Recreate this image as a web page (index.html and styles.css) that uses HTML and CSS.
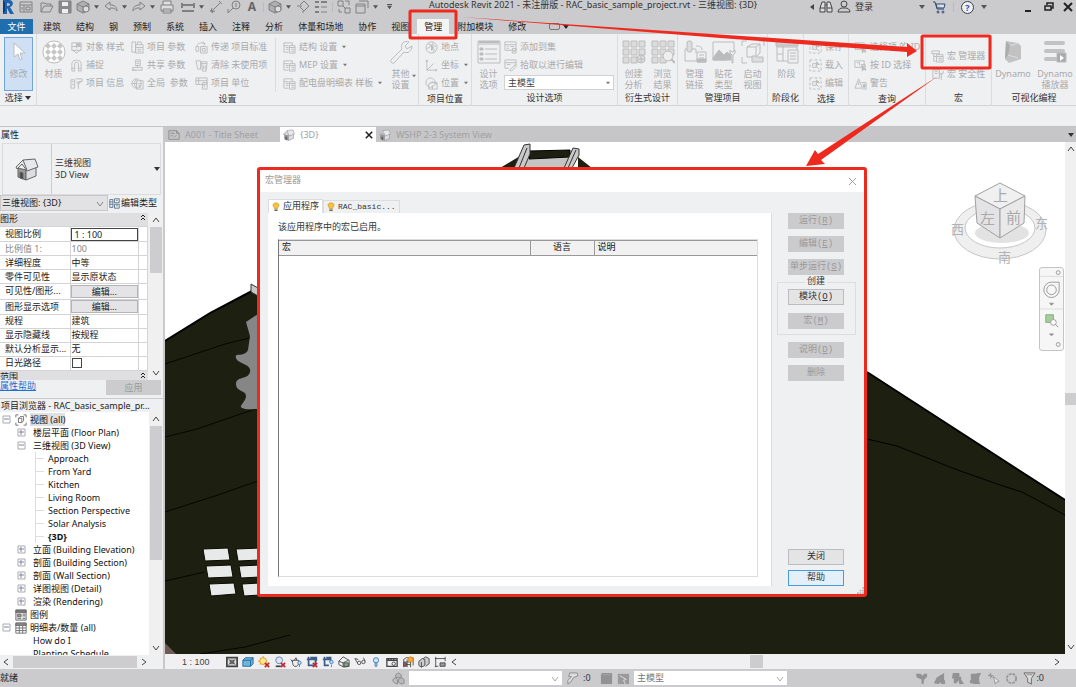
FILE: index.html
```
<!DOCTYPE html>
<html lang="zh-CN">
<head>
    <meta charset="UTF-8">
    <meta name="viewport" content="width=device-width, initial-scale=1.0">
    <title>Autodesk Revit 2021</title>
    <link rel="stylesheet" href="styles.css">
</head>
<body>

<!-- icon set -->
<svg class="sprite" aria-hidden="true">
    <symbol id="caret" viewBox="0 0 6 6"><path d="M0 1h6L3 5z" fill="currentColor" stroke="none"/></symbol>
    <symbol id="chev-down" viewBox="0 0 8 8"><path d="M1 2l3 4 3-4"/></symbol>
    <symbol id="chev-up" viewBox="0 0 8 8"><path d="M1 6l3-4 3 4"/></symbol>
    <symbol id="chev-left" viewBox="0 0 8 8"><path d="M6 1L2 4l4 3"/></symbol>
    <symbol id="chev-right" viewBox="0 0 8 8"><path d="M2 1l4 3-4 3"/></symbol>
    <symbol id="dbl-up" viewBox="0 0 8 8"><path d="M2 4l2-2 2 2M2 7l2-2 2 2"/></symbol>
    <symbol id="close" viewBox="0 0 10 10"><path d="M1 1l8 8M9 1L1 9"/></symbol>

    <symbol id="logo" viewBox="0 0 14 14"><path d="M2 0h6c5 0 5 6 1 7l4 7H9L6 8v6H2z M6 3v3c4 0 4-3 0-3z" fill="#1e63ae" fill-rule="evenodd" stroke="none"/><path d="M2 0l2 3v8l-2 3z" fill="#0c3d78" stroke="none"/></symbol>
    <symbol id="home" viewBox="0 0 14 14"><path d="M1 2h12v10H1zM1 5h12M5 5v7M7 7h4v3H7zM3 7v3"/></symbol>
    <symbol id="open" viewBox="0 0 14 14"><path d="M1 12V3h4l1 1h5v2M1 12l3-6h9l-3 6z"/></symbol>
    <symbol id="save" viewBox="0 0 14 14"><path d="M1 1h12v12H1z" fill="#8a8a8c"/><path d="M4 2h6v4H4zM4 9h6v4H4z" fill="#eee" stroke="none"/></symbol>
    <symbol id="cube" viewBox="0 0 14 14"><path d="M1 4l6-3 6 3v6l-6 3-6-3z" fill="#b0b0b2"/><path d="M1 4l6 3 6-3M7 7v6"/><circle cx="10" cy="9" r="3" fill="#ddd"/></symbol>
    <symbol id="undo" viewBox="0 0 14 14"><path d="M1 6l5-4v3c5 0 7 2 7 6-2-3-4-3-7-3v2z"/></symbol>
    <symbol id="redo" viewBox="0 0 14 14"><path d="M13 6L8 2v3c-5 0-7 2-7 6 2-3 4-3 7-3v2z"/></symbol>
    <symbol id="print" viewBox="0 0 14 14"><path d="M3 5V1h8v4M1 5h12v6H1zM3 9h8v4H3z" fill="#ddd"/></symbol>
    <symbol id="dim" viewBox="0 0 14 14"><path d="M1 3v5M13 3v5M1 5h12M1 11h12" stroke-width="2"/></symbol>
    <symbol id="line" viewBox="0 0 14 14"><path d="M2 12L12 2M1 10l3 3M10 1l3 3M2 12l1-4M2 12l4-1"/></symbol>
    <symbol id="tag" viewBox="0 0 14 14"><circle cx="9" cy="5" r="4"/><path d="M9 3v4M6 8l-5 5M1 9v4"/></symbol>
    <symbol id="section" viewBox="0 0 14 14"><path d="M4 5l4-4 5 5-5 5-4-4M1 6h5M7 11v2"/></symbol>
    <symbol id="thin" viewBox="0 0 14 14"><path d="M1 2h4M7 2h6M1 7h4M1 12h4" stroke-width="2"/><path d="M7 7h6M7 12h6"/></symbol>
    <symbol id="windows" viewBox="0 0 14 14"><path d="M1 1h5v5H1zM8 8h5v5H8zM8 1h4v4M2 9v3h3M6 6l3 3"/></symbol>
    <symbol id="switch" viewBox="0 0 14 14"><path d="M4 1h9v7M1 4h9v9H1zM1 6h9"/></symbol>
    <symbol id="binoc" viewBox="0 0 14 14"><path d="M1 12V8l2-6h3v10zM8 12V2h3l2 6v4zM6 5h2M1 8h5M8 8h5" fill="#ddd"/></symbol>
    <symbol id="user" viewBox="0 0 14 14"><circle cx="7" cy="4" r="3"/><path d="M1 12c0-3 3-4 4-4h4c1 0 4 1 4 4z"/></symbol>
    <symbol id="cart" viewBox="0 0 14 14"><path d="M1 2h2l2 7h7M4 4h9l-1 4H5z" fill="#dde3ee"/><circle cx="6" cy="12" r="1"/><circle cx="11" cy="12" r="1"/></symbol>
    <symbol id="restore" viewBox="0 0 10 10"><path d="M3 3V1h6v5H7M1 4h6v4H1z" stroke-width="1.5"/></symbol>

    <symbol id="arrow" viewBox="0 0 14 20"><path d="M2 1v14l4-3 2 6 2-1-2-6h5z" fill="#fff"/></symbol>
    <symbol id="obj" viewBox="0 0 14 14"><path d="M2 2h10v8H2zM2 6h10M7 2v6M3 10l4 3 5-4"/><path d="M8 3h3v2H8z" fill="currentColor"/></symbol>
    <symbol id="snap" viewBox="0 0 14 14"><path d="M2 13V5c0-5 10-5 10 0v8H9V5c0-2-4-2-4 0v8zM2 10h3M9 10h3"/></symbol>
    <symbol id="info" viewBox="0 0 14 14"><path d="M1 3h4v9H1zM6 2h7v3H9v8M7 5l2 3 3-4M2 5h2M2 8h2"/></symbol>
    <symbol id="param" viewBox="0 0 14 14"><path d="M1 1h4v11M5 4h8v9H5zM5 7h8M7 9h4M7 11h4M1 1v11h4"/><path d="M7 4V1h4v3"/></symbol>
    <symbol id="share" viewBox="0 0 14 14"><path d="M5 1h5v6H5zM2 9h10v3H2zM7 7v2M6 3h3M6 5h3M1 12h4"/></symbol>
    <symbol id="global" viewBox="0 0 14 14"><circle cx="6" cy="7" r="5"/><path d="M1 7h6M6 2c-3 3-3 7 0 10M6 4h7v9H6zM8 7h3M8 9h3M8 11h3"/></symbol>
    <symbol id="transfer" viewBox="0 0 14 14"><path d="M6 6h7v7H6zM8 8h3v3H8zM2 6C2 2 7 1 10 3M8 1l3 2-2 2M1 6h3v5H1z"/></symbol>
    <symbol id="purge" viewBox="0 0 14 14"><path d="M1 2h5v9H3zM7 3h6l-1 10H8zM7 5h6M9 7v4M11 7v4"/></symbol>
    <symbol id="unit" viewBox="0 0 14 14"><path d="M1 1h12v7H1zM1 4h12M4 1v7M8 6h5v7H8zM10 8v3"/></symbol>
    <symbol id="sheet" viewBox="0 0 14 14"><path d="M1 2h9v3M1 2v10h5M1 5h5M3 7h3M3 9h3M7 5h6v8H7zM7 7h6M9 9h3M9 11h3"/></symbol>
    <symbol id="page" viewBox="0 0 14 14"><path d="M1 2h9l3 3v7H1zM10 2v3h3M3 5h5M3 8h3M7 10l3-3"/></symbol>
    <symbol id="globe" viewBox="0 0 14 14"><circle cx="7" cy="7" r="6"/><path d="M3 3l3 1-1 3-3 1M8 2l1 3 3 1M7 8l3 1-1 3"/><path d="M7 4v6l2-3z" fill="currentColor"/></symbol>
    <symbol id="coord" viewBox="0 0 14 14"><path d="M2 1v11h11M1 3l1-2 1 2M11 11l2 1-2 1M2 12l7-7"/></symbol>
    <symbol id="place" viewBox="0 0 14 14"><circle cx="6" cy="6" r="5"/><path d="M6 6h7v7H4V8zM4 8l4-3 5 3M8 13V9"/></symbol>
    <symbol id="addset" viewBox="0 0 14 14"><path d="M1 1h12v9H1zM1 4h12M3 6h2M7 6h4M3 8h2M9 8h4v5H9zM10 11h2"/></symbol>
    <symbol id="pick" viewBox="0 0 14 14"><path d="M1 1h12v6M1 1v9h4M1 4h12M6 12l6-6 1 2-5 5zM3 6h4"/></symbol>
    <symbol id="brush" viewBox="0 0 14 14"><path d="M4 1h8l1 3-5 2-3 5-3 2V9l4-4H3z" fill="#ddd"/></symbol>
    <symbol id="selset" viewBox="0 0 14 14"><path d="M1 1h12v12H1z" stroke-dasharray="3 2"/><path d="M4 5h4v4H4zM7 7l4 4"/><path d="M8 3l3 3H8z" fill="currentColor"/></symbol>
    <symbol id="idsel" viewBox="0 0 14 14"><path d="M1 2h10v7H1zM3 4h3v3M8 6h4v5H9z"/><path d="M9 7l4 5-3-1-1 2z" fill="currentColor"/></symbol>
    <symbol id="warn" viewBox="0 0 14 14"><path d="M5 2l4 10H1zM5 5v4M8 6h5v7H9"/><path d="M10 8h2v3h-2z" fill="currentColor"/></symbol>
    <symbol id="macro" viewBox="0 0 14 14"><path d="M1 1h8v3H1zM3 4v8M3 7h3M3 12h2M6 5h7v8H6zM6 7h7M8 9h4M8 11h4"/></symbol>
    <symbol id="macrosec" viewBox="0 0 14 14"><path d="M2 2h7v9H2zM4 4h3M4 6h3M11 5v8M9 3v3l2 1 2-1V3"/></symbol>

    <symbol id="material" viewBox="0 0 24 24">
        <circle cx="12" cy="12" r="11" fill="#fff"/>
        <path d="M6 3l3 3-3 3-3-3zM12 3l3 3-3 3-3-3zM18 3l3 3-3 3-3-3zM6 9l3 3-3 3-3-3zM12 9l3 3-3 3-3-3zM18 9l3 3-3 3-3-3zM6 15l3 3-3 3-3-3zM12 15l3 3-3 3-3-3zM18 15l3 3-3 3-3-3z" stroke="none" fill="#c6c6c6"/>
    </symbol>
    <symbol id="wrench" viewBox="0 0 24 24"><path d="M2 20L13 9c-2-5 2-9 7-7l-4 4 2 3 5-3c0 5-4 8-8 6L5 23c-2 1-4-1-3-3z"/></symbol>
    <symbol id="options" viewBox="0 0 24 24"><path d="M1 1h22v22H1zM1 4h22M8 9h12M8 14h12M8 19h12"/><path d="M3 8h3v2H3zM3 13h3v2H3zM3 18h3v2H3z" fill="currentColor"/><path d="M2 2h20" stroke-width="2"/></symbol>
    <symbol id="gen" viewBox="0 0 24 24"><path d="M1 1h6v6H1zM9 1h6v6H9zM17 1h6v6h-6zM1 9h6v6H1zM9 9h6v6H9zM17 9h6v6h-6zM1 17h6v6H1zM9 17h6v6H9z" fill="#dcdcdc"/><circle cx="19" cy="19" r="4" fill="#ddd"/><path d="M19 16v6M16 19h6"/></symbol>
    <symbol id="browse" viewBox="0 0 24 24"><path d="M1 1h6v6H1zM9 1h6v6H9zM17 1h6v6h-6zM1 9h6v6H1zM9 9h6v6H9zM17 9h6v6h-6zM1 17h6v6H1zM9 17h6v6H9z" fill="#dcdcdc"/><circle cx="17" cy="16" r="5" fill="#eee"/><path d="M20 19l4 4" stroke-width="2"/></symbol>
    <symbol id="link" viewBox="0 0 24 24"><path d="M2 9v12h11M2 9h3M8 9h5v4M14 12h9v10h-9zM16 15h5M16 18h5M13 6c4 0 6 1 6 4"/><rect x="4" y="1" width="5" height="11" rx="2" fill="#ddd"/><path d="M14 19h9v3h-9z" fill="#bbb"/></symbol>
    <symbol id="decal" viewBox="0 0 24 24"><path d="M1 2h21v10M1 2v18h14"/><path d="M1 18l6-8 5 5 3-3 4 3v5H1z" fill="#bbb"/><path d="M20 23v-8l-2-2v-3l2 2h1l2-2v3l-2 2v8z" fill="#eee"/></symbol>
    <symbol id="startview" viewBox="0 0 24 24"><path d="M1 6V1h5M18 1h5v5M1 17v6h5M6 7l5-3h8v9l-4 4H6zM6 7h9v10M15 7l4-3"/><path d="M11 22v-6h4l1 1h6v5z" fill="#ddd"/></symbol>
    <symbol id="phase" viewBox="0 0 24 24"><path d="M2 3h20v18H2zM2 7h20M8 3v18M2 14h6"/><path d="M1 2h22v4H1z" fill="#ccc"/><path d="M13 10h10v13H13zM15 13h6M15 16h6M15 19h6" fill="#eee"/></symbol>
    <symbol id="dynamo" viewBox="0 0 24 24"><path d="M5 1l12 2 3 3v13l-12 4-4-4z" fill="#c2c2c2" stroke="none"/><path d="M5 1l4 5-2 9-3 4z" fill="#adadad" stroke="none"/><path d="M9 6l8-3M7 15l10 3" stroke="#ddd"/></symbol>
    <symbol id="player" viewBox="0 0 24 24"><path d="M3 3h17M3 11h17M3 19h10" stroke-width="4" stroke-linecap="round" stroke="#c2c2c2"/><path d="M14 13h9v9h-9z" fill="#a9a9a9"/><path d="M17 15l4 3-4 3z" fill="#fff" stroke="none"/></symbol>

    <symbol id="house" viewBox="0 0 24 24">
        <path d="M3 11v9l8 3V13z" fill="#9a9a9c"/><path d="M11 13v10l10-4v-9z" fill="#dcdde0"/>
        <path d="M1 10l7-7 12-1 3 8-11 4-5-7-5 5z" fill="#e6e8ec"/><path d="M5 15v6l3 1v-6z" fill="#444"/>
        <path d="M8 3l4 10" />
    </symbol>
    <symbol id="views" viewBox="0 0 14 14"><path d="M1 4V1h3M10 1h3v3M13 10v3h-3M4 13H1v-3M4 5l2-2h4v5l-2 2H4zM4 5h4v5"/></symbol>
    <symbol id="legend" viewBox="0 0 14 14"><path d="M1 2h12v11H1z" fill="#e2e2e2"/><path d="M1 1h12v3H1z" fill="#777"/><path d="M3 6h4v3H3z" fill="#999"/><path d="M9 6h3M9 8h3M3 11h4M9 11h3"/></symbol>
    <symbol id="grid" viewBox="0 0 14 14"><path d="M1 2h12v11H1z" fill="#fff"/><path d="M1 1h12v3H1z" fill="#888"/><path d="M1 7h12M1 10h12M5 4v9M9 4v9"/></symbol>
    <symbol id="plus" viewBox="0 0 9 9"><path d="M1 1h7v7H1z" fill="#fff"/><path d="M2 4h5M4 2v5" stroke="#7a86a8"/></symbol>
    <symbol id="minus" viewBox="0 0 9 9"><path d="M1 1h7v7H1z" fill="#fff"/><path d="M2 4h5" stroke="#7a86a8"/></symbol>
    <symbol id="edittype" viewBox="0 0 14 14"><path d="M1 2h4v10H1zM7 1h6v5H7zM7 8h6v5H7zM1 5h4M9 3h2M9 10h2M1 8h4" stroke="#46617c"/></symbol>
    <symbol id="bulb" viewBox="0 0 10 12"><path d="M5 1c5 0 4 4 2 6v1H3V7C1 5 0 1 5 1z" fill="#f5c242" stroke="#d99b1c"/><path d="M3 9h4v2H3z" fill="#667" stroke="none"/></symbol>

    <symbol id="detail" viewBox="0 0 14 14"><path d="M1 2h12v10H1z" fill="#ddd" stroke-width="2"/><path d="M3 4l8 6M11 4l-8 6M5 5h4v4H5z"/></symbol>
    <symbol id="style" viewBox="0 0 14 14"><path d="M1 5l3-3h9v7l-3 3H1z" fill="#6bb5e4" stroke="#1f648f"/><path d="M1 5h9v7M10 5l3-3" stroke="#1f648f"/></symbol>
    <symbol id="sun" viewBox="0 0 14 14"><circle cx="6" cy="6" r="4" fill="#ffe58a" stroke="#d8961a"/><path d="M6 0v2M0 6h2M2 2l1 1M2 10l1-1" stroke="#d8961a"/><path d="M8 8l5 5M13 8l-5 5" stroke="#c3272b" stroke-width="2"/></symbol>
    <symbol id="shadow" viewBox="0 0 14 14"><circle cx="6" cy="5" r="4" fill="#d9e6f5" stroke="#5f7fa5"/><path d="M2 12h6" stroke-width="2"/><path d="M8 8l5 5M13 8l-5 5" stroke="#c3272b" stroke-width="2"/></symbol>
    <symbol id="teapot" viewBox="0 0 14 14"><path d="M3 5h7c1 4-1 6-2 7H5C3 11 3 8 3 5zM3 7L1 4M5 5l2-3 1 3"/><circle cx="11" cy="8" r="2" fill="#bfe0ff" stroke="#3c78b4"/><path d="M11 10v3" stroke="#3c78b4"/></symbol>
    <symbol id="crop" viewBox="0 0 14 14"><path d="M3 1v10h6M1 4h10v6M6 4V2h6v4" stroke="#3a5f8a" stroke-width="2"/><path d="M8 8l5 5M13 8l-5 5" stroke="#c3272b" stroke-width="2"/></symbol>
    <symbol id="cropview" viewBox="0 0 14 14"><path d="M3 1v10h5M1 4h9v3M6 4V2h5" stroke="#3a5f8a" stroke-width="2"/><circle cx="11" cy="7" r="2" fill="#bfe0ff" stroke="#3c78b4"/><path d="M11 10v3" stroke="#3c78b4"/></symbol>
    <symbol id="lock3d" viewBox="0 0 14 14"><path d="M1 6l5-5 7 4v7l-6 1-6-3zM1 6l5 2v5M6 8l6-3"/><path d="M7 8h5v4H7z" fill="#7fb58b"/></symbol>
    <symbol id="glasses" viewBox="0 0 14 14"><circle cx="6" cy="8" r="2"/><circle cx="11" cy="7" r="2"/><path d="M4 8L1 3l4 1M13 6l-2-4"/></symbol>
    <symbol id="lamp" viewBox="0 0 14 14"><circle cx="7" cy="5" r="3" fill="#cfe8ff" stroke="#2e6fb0"/><path d="M6 8v4h2V8" stroke="#2e6fb0"/></symbol>
    <symbol id="prop" viewBox="0 0 14 14"><path d="M1 3h12v9H1zM1 5h12M3 3v2M6 3v2M9 3v2" stroke-width="1.5"/><circle cx="9" cy="9" r="2"/></symbol>
    <symbol id="analytic" viewBox="0 0 14 14"><path d="M2 13V4l3-2h8v9M2 7h8M2 10h8M6 4v9M10 4v9"/><path d="M2 8h3v4H2z" fill="#b5544c"/><circle cx="10" cy="4" r="3" fill="#f4a93a" stroke="#d98a1c"/></symbol>
    <symbol id="displace" viewBox="0 0 14 14"><path d="M1 6l4-3 3 1v7l-4 2-3-2zM6 3l3-2 4 2v6l-4 3M4 7v6" fill="#ccc"/></symbol>
    <symbol id="constraint" viewBox="0 0 14 14"><path d="M1 3h12M2 1v12M13 1v5M1 12h4"/><path d="M7 8h6v4H7z" fill="#999"/></symbol>
    <symbol id="workset" viewBox="0 0 14 14"><path d="M7 1l3 2v3H4V3zM4 6l2 2v5l-3-1-2-2V8zM10 6l3 2v4l-3 1-3-2V8z" fill="#bbb"/></symbol>
    <symbol id="solid" viewBox="0 0 14 14"><path d="M2 1h11v12H1V3z" fill="#929294" stroke="none"/><path d="M3 3h8" stroke="#aaa"/></symbol>
    <symbol id="solid2" viewBox="0 0 14 14"><path d="M1 2h12v11H1z" fill="#9a9a9c" stroke="none"/><path d="M3 4l7 4-3 1 2 4" stroke="#ddd"/></symbol>
    <symbol id="selA" viewBox="0 0 14 14"><path d="M1 2h5l2 2 2-2h3v3l-3 3-1 5H7V8L2 6z" fill="#929294" stroke="none"/></symbol>
    <symbol id="selB" viewBox="0 0 14 14"><path d="M1 12l3-6 8-5v8h1v4H9l-1-2-2 2z" fill="#929294" stroke="none"/></symbol>
    <symbol id="selC" viewBox="0 0 14 14"><path d="M2 1h7v4h2v3l3 5H9L8 9l-2 3H3V7H1z" fill="#929294" stroke="none"/></symbol>
    <symbol id="selE" viewBox="0 0 14 14"><path d="M2 2h6l1-1h4l-2 4v5l1 3H6l-3-1H1V9h1z" fill="#929294" stroke="none"/></symbol>
    <symbol id="selD" viewBox="0 0 14 14"><path d="M1 4h6M4 1v6M2 2l4 4" stroke="#929294"/><path d="M7 5l6 5-3 1-1 2z" fill="#eee" stroke="#929294"/></symbol>
    <symbol id="gear" viewBox="0 0 14 14"><circle cx="7" cy="7" r="5" stroke="#989898" stroke-width="2" stroke-dasharray="3 1"/></symbol>
    <symbol id="filter" viewBox="0 0 14 14"><path d="M1 1h12L9 7v6l-4-2V7z" fill="#ddd" stroke="#666"/><path d="M4 3h6" stroke="#888"/></symbol>
</svg>

<header class="titlebar">
    <div class="quick">
        <svg class="ic"><use href="#logo"/></svg>
        <svg class="ic"><use href="#home"/></svg>
        <svg class="ic gap"><use href="#open"/></svg>
        <svg class="ic"><use href="#save"/></svg>
        <svg class="ic"><use href="#cube"/></svg>
        <svg class="caret"><use href="#caret"/></svg>
        <svg class="ic"><use href="#undo"/></svg>
        <svg class="caret"><use href="#caret"/></svg>
        <svg class="ic"><use href="#redo"/></svg>
        <svg class="caret"><use href="#caret"/></svg>
        <svg class="ic"><use href="#print"/></svg>
        <svg class="ic gap"><use href="#dim"/></svg>
        <svg class="caret"><use href="#caret"/></svg>
        <svg class="ic"><use href="#line"/></svg>
        <svg class="ic"><use href="#tag"/></svg>
        <b class="letter">A</b>
        <i class="sep"></i>
        <svg class="ic"><use href="#cube"/></svg>
        <svg class="caret"><use href="#caret"/></svg>
        <svg class="ic"><use href="#section"/></svg>
        <svg class="ic"><use href="#thin"/></svg>
        <i class="sep"></i>
        <svg class="ic"><use href="#windows"/></svg>
        <svg class="ic"><use href="#switch"/></svg>
        <svg class="caret"><use href="#caret"/></svg>
        <svg class="caret more"><use href="#caret"/></svg>
    </div>
    <div class="app-title">Autodesk Revit 2021 - 未注册版 - RAC_basic_sample_project.rvt - 三维视图: {3D}</div>
    <div class="account">
        <svg class="caret left"><use href="#caret"/></svg>
        <svg class="ic"><use href="#binoc"/></svg>
        <svg class="ic"><use href="#user"/></svg>
        <a href="#">登录</a>
    </div>
    <div class="window-tools">
        <svg class="caret"><use href="#caret"/></svg>
        <svg class="ic cart"><use href="#cart"/></svg>
        <i class="sep"></i>
        <span class="help">?</span>
        <svg class="caret"><use href="#caret"/></svg>
    </div>
    <div class="window-btns">
        <button aria-label="最小化"><i class="min"></i></button>
        <button aria-label="还原"><svg><use href="#restore"/></svg></button>
        <button aria-label="关闭"><svg class="thick"><use href="#close"/></svg></button>
    </div>
</header>

<nav class="tabs">
    <button class="file">文件</button>
    <button>建筑</button>
    <button>结构</button>
    <button>钢</button>
    <button>预制</button>
    <button>系统</button>
    <button>插入</button>
    <button>注释</button>
    <button>分析</button>
    <button>体量和场地</button>
    <button>协作</button>
    <button>视图</button>
    <button class="active">管理</button>
    <button>附加模块</button>
    <button>修改</button>
    <span class="toggle"><i></i><svg class="caret"><use href="#caret"/></svg></span>
</nav>

<section class="ribbon">
    <div class="panel p-select">
        <div class="body">
            <button class="big modify"><svg class="cursor"><use href="#arrow"/></svg><span>修改</span></button>
        </div>
        <div class="label">选择 <svg class="caret"><use href="#caret"/></svg></div>
    </div>
    <div class="panel p-settings">
        <div class="body">
            <button class="big"><svg><use href="#material"/></svg><span>材质</span></button>
            <div class="rows c1">
                <button><svg class="ic"><use href="#obj"/></svg>对象 样式</button>
                <button><svg class="ic"><use href="#snap"/></svg>捕捉</button>
                <button><svg class="ic"><use href="#info"/></svg>项目 信息</button>
            </div>
            <div class="rows c2">
                <button><svg class="ic"><use href="#param"/></svg>项目 参数</button>
                <button><svg class="ic"><use href="#share"/></svg>共享 参数</button>
                <button><svg class="ic"><use href="#global"/></svg>全局 &nbsp;参数</button>
            </div>
            <div class="rows c3">
                <button><svg class="ic"><use href="#transfer"/></svg>传递 项目标准</button>
                <button><svg class="ic"><use href="#purge"/></svg>清除 未使用项</button>
                <button><svg class="ic"><use href="#unit"/></svg>项目 单位</button>
            </div>
            <div class="rows c4">
                <button><svg class="ic"><use href="#sheet"/></svg>结构 设置<svg class="caret"><use href="#caret"/></svg></button>
                <button><svg class="ic"><use href="#sheet"/></svg>MEP 设置<svg class="caret"><use href="#caret"/></svg></button>
                <button><svg class="ic"><use href="#sheet"/></svg>配电盘明细表 样板<svg class="caret"><use href="#caret"/></svg></button>
            </div>
            <button class="big"><svg><use href="#wrench"/></svg><span>其他<br>设置</span><svg class="caret corner"><use href="#caret"/></svg></button>
        </div>
        <div class="label">设置</div>
    </div>
    <div class="panel p-location">
        <div class="body">
            <div class="rows">
                <button><svg class="ic"><use href="#globe"/></svg>地点</button>
                <button><svg class="ic"><use href="#coord"/></svg>坐标<svg class="caret"><use href="#caret"/></svg></button>
                <button><svg class="ic"><use href="#place"/></svg>位置<svg class="caret"><use href="#caret"/></svg></button>
            </div>
        </div>
        <div class="label">项目位置</div>
    </div>
    <div class="panel p-design">
        <div class="body">
            <button class="big"><svg><use href="#options"/></svg><span>设计<br>选项</span></button>
            <div class="rows grow">
                <button><svg class="ic"><use href="#addset"/></svg>添加到集</button>
                <button><svg class="ic"><use href="#pick"/></svg>拾取以进行编辑</button>
                <div class="combo">
                    <select aria-label="设计选项"><option>主模型</option></select>
                    <svg class="caret"><use href="#caret"/></svg>
                </div>
            </div>
        </div>
        <div class="label">设计选项</div>
    </div>
    <div class="panel p-gen">
        <div class="body">
            <button class="big"><svg><use href="#gen"/></svg><span>创建<br>分析</span></button>
            <button class="big"><svg><use href="#browse"/></svg><span>浏览<br>结果</span></button>
        </div>
        <div class="label">衍生式设计</div>
    </div>
    <div class="panel p-manage">
        <div class="body">
            <button class="big"><svg><use href="#link"/></svg><span>管理<br>链接</span></button>
            <button class="big"><svg><use href="#decal"/></svg><span>贴花<br>类型</span></button>
            <button class="big"><svg><use href="#startview"/></svg><span>启动<br>视图</span></button>
        </div>
        <div class="label">管理项目</div>
    </div>
    <div class="panel p-phase">
        <div class="body">
            <button class="big"><svg><use href="#phase"/></svg><span>阶段</span></button>
        </div>
        <div class="label">阶段化</div>
    </div>
    <div class="panel p-selection">
        <div class="body">
            <div class="rows">
                <button><svg class="ic"><use href="#selset"/></svg>保存</button>
                <button><svg class="ic"><use href="#selset"/></svg>载入</button>
                <button><svg class="ic"><use href="#selset"/></svg>编辑</button>
            </div>
        </div>
        <div class="label">选择</div>
    </div>
    <div class="panel p-query">
        <div class="body">
            <div class="rows">
                <button><svg class="ic"><use href="#idsel"/></svg>选择项 的 ID</button>
                <button><svg class="ic"><use href="#idsel"/></svg>按 ID 选择</button>
                <button><svg class="ic"><use href="#warn"/></svg>警告</button>
            </div>
        </div>
        <div class="label">查询</div>
    </div>
    <div class="panel p-macro">
        <div class="body">
            <div class="rows two">
                <button><svg class="ic"><use href="#macro"/></svg>宏 管理器</button>
                <button><svg class="ic"><use href="#macrosec"/></svg>宏 安全性</button>
            </div>
        </div>
        <div class="label">宏</div>
    </div>
    <div class="panel p-visual">
        <div class="body">
            <button class="big"><svg><use href="#dynamo"/></svg><span>Dynamo</span></button>
            <button class="big"><svg><use href="#player"/></svg><span>Dynamo<br>播放器</span></button>
        </div>
        <div class="label">可视化编程</div>
    </div>
</section>

<main class="work">
    <aside class="side">
        <section class="props">
            <h2>属性</h2>
            <div class="type">
                <div class="thumb"><svg><use href="#house"/></svg></div>
                <p>三维视图<br>3D View</p>
                <svg class="caret"><use href="#caret"/></svg>
            </div>
            <div class="instance">
                <div class="combo">
                    <select aria-label="实例"><option>三维视图: {3D}</option></select>
                    <svg class="chev"><use href="#chev-down"/></svg>
                </div>
                <button><svg class="ic"><use href="#edittype"/></svg>编辑类型</button>
            </div>
            <div class="prop-list">
                <div class="prop-data">
                    <div class="group"><span>图形</span><svg class="chev"><use href="#dbl-up"/></svg></div>
                    <table>
                        <tr><th>视图比例</th><td class="edit"><input type="text" value="1 : 100" aria-label="视图比例"></td><td></td></tr>
                        <tr class="off"><th>比例值 1:</th><td>100</td><td></td></tr>
                        <tr><th>详细程度</th><td>中等</td><td></td></tr>
                        <tr><th>零件可见性</th><td>显示原状态</td><td></td></tr>
                        <tr><th>可见性/图形...</th><td class="edit"><button>编辑...</button></td><td></td></tr>
                        <tr><th>图形显示选项</th><td class="edit"><button>编辑...</button></td><td></td></tr>
                        <tr><th>规程</th><td>建筑</td><td></td></tr>
                        <tr><th>显示隐藏线</th><td>按规程</td><td></td></tr>
                        <tr><th>默认分析显示...</th><td>无</td><td></td></tr>
                        <tr><th><label for="sunpath">日光路径</label></th><td><input type="checkbox" id="sunpath"></td><td></td></tr>
                    </table>
                    <div class="group cut"><span>范围</span><svg class="chev"><use href="#dbl-up"/></svg></div>
                </div>
                <div class="vscroll">
                    <svg class="chev"><use href="#chev-up"/></svg>
                    <i class="thumb-s"></i>
                    <svg class="chev end"><use href="#chev-down"/></svg>
                </div>
            </div>
            <footer><a href="#">属性帮助</a><button disabled>应用</button></footer>
        </section>

        <section class="browser">
            <h2>项目浏览器 - RAC_basic_sample_pr...</h2>
            <div class="tree-wrap">
                <ul class="tree">
                    <li class="l0"><svg class="box"><use href="#minus"/></svg><svg class="ic"><use href="#views"/></svg><span class="sel">视图 (all)</span></li>
                    <li class="l1"><svg class="box"><use href="#plus"/></svg>楼层平面 (Floor Plan)</li>
                    <li class="l1"><svg class="box"><use href="#minus"/></svg>三维视图 (3D View)</li>
                    <li class="l2">Approach</li>
                    <li class="l2">From Yard</li>
                    <li class="l2">Kitchen</li>
                    <li class="l2">Living Room</li>
                    <li class="l2">Section Perspective</li>
                    <li class="l2">Solar Analysis</li>
                    <li class="l2"><b>{3D}</b></li>
                    <li class="l1"><svg class="box"><use href="#plus"/></svg>立面 (Building Elevation)</li>
                    <li class="l1"><svg class="box"><use href="#plus"/></svg>剖面 (Building Section)</li>
                    <li class="l1"><svg class="box"><use href="#plus"/></svg>剖面 (Wall Section)</li>
                    <li class="l1"><svg class="box"><use href="#plus"/></svg>详图视图 (Detail)</li>
                    <li class="l1"><svg class="box"><use href="#plus"/></svg>渲染 (Rendering)</li>
                    <li class="l0 leaf"><svg class="ic"><use href="#legend"/></svg>图例</li>
                    <li class="l0"><svg class="box"><use href="#minus"/></svg><svg class="ic"><use href="#grid"/></svg>明细表/数量 (all)</li>
                    <li class="l1 leaf">How do I</li>
                    <li class="l1 leaf">Planting Schedule</li>
                </ul>
                <div class="vscroll">
                    <svg class="chev"><use href="#chev-up"/></svg>
                    <i class="thumb-s long"></i>
                    <svg class="chev end"><use href="#chev-down"/></svg>
                </div>
            </div>
            <div class="hscroll">
                <svg class="chev"><use href="#chev-left"/></svg>
                <i></i>
                <svg class="chev"><use href="#chev-right"/></svg>
            </div>
        </section>
    </aside>

    <section class="view">
        <div class="view-tabs">
            <button class="sheet-tab"><svg class="ic"><use href="#page"/></svg>A001 - Title Sheet</button>
            <button class="active"><svg class="ic"><use href="#house"/></svg>{3D}<svg class="x"><use href="#close"/></svg></button>
            <button><svg class="ic"><use href="#house"/></svg>WSHP 2-3 System View</button>
            <svg class="caret"><use href="#caret"/></svg>
        </div>
        <div class="view-body">
            <div class="canvas">
                <!-- terrain and roof -->
                <svg class="scene" viewBox="165 142 900 512" preserveAspectRatio="none">
                    <path d="M165 341L210 313 252 291 500 168H592L867 372 1065 500V654H165z" fill="#1d2010"/>
                    <path d="M165 341L210 313 252 291M867 372L1065 500" fill="none" stroke="#000" stroke-width="2"/>
                    <path d="M165 364l60-20 33-8M165 437l32-8 61-21M165 512l50-16 43-15M165 581l40-9M200 654l45-7 45-12" fill="none" stroke="#050600"/>
                    <path d="M867 439l30 7 58 23 45 16 22 7 43 23" fill="none" stroke="#000"/>
                    <path d="M165 643l11 11h-11z" fill="#6d5a50"/>
                    <path d="M251 284l7 4v8l-7-4z" fill="#c8c8c8" stroke="#333"/>
                    <path d="M258 314l-12 8 4 14-2 14c-4 8-14 2-12 8s16 6 14 14-14 4-14 12 10 6 10 12-8 10-4 12 10 1 16 1z" fill="#868686"/>
                    <path d="M203 549l25-1 2 12-25 1zM236 549l24-1v12l-22 1zM206 566l25-1 2 12-25 1zM239 566l21-1v12l-19 1zM209 584l25-1 2 11-25 2zM242 584l18-1v12l-16 1z" fill="#e8eaea" stroke="#080900"/>
                    <path d="M500 168l20-12v12zM578 157l14 11h-14z" fill="#1d2010"/>
                    <path d="M524 159l48-2-4 11h-48z" fill="#c4c4c4"/>
                    <path d="M529 151l41-1v7l-41 2z" fill="#1d2010" stroke="#000"/>
                    <path d="M514 168l10-23 6-1v10l-6 14zM564 168l9-20 6 1v6l-7 13z" fill="#c9c9c9" stroke="#333"/>
                    <path d="M519 168l8-20M568 168l8-18" stroke="#333" fill="none"/>
                </svg>
                <svg class="viewcube" viewBox="0 0 100 90">
                    <ellipse cx="50" cy="51" rx="46" ry="29" fill="#efeff0" stroke="#c6c6c8"/>
                    <ellipse cx="50" cy="49" rx="35" ry="20" fill="#fff" stroke="#c6c6c8"/>
                    <ellipse cx="52" cy="54" rx="27" ry="10" fill="#e2e2e3" stroke="none"/>
                    <path d="M25 17l25-13 25 13-25 13z" fill="#f0f0f1" stroke="#a0a0a2"/>
                    <path d="M25 17l25 13v29L27 44z" fill="#e3e3e5" stroke="#a0a0a2"/>
                    <path d="M75 17L50 30v29l24-15z" fill="#e9e9ea" stroke="#a0a0a2"/>
                    <text x="43" y="22" class="face">上</text>
                    <text x="30" y="45" class="face">左</text>
                    <text x="56" y="44" class="face">前</text>
                    <text x="1" y="55" class="dir">西</text>
                    <text x="85" y="49" class="dir">东</text>
                    <text x="48" y="83" class="dir">南</text>
                </svg>
                <div class="navbar">
                    <svg viewBox="0 0 24 84">
                        <circle cx="19" cy="4" r="2"/><path d="M0 8h24M0 42h24" stroke="#ddd"/>
                        <path d="M12 14h8v8a8 8 0 1 1-8-8z"/><circle cx="12" cy="22" r="5"/>
                        <path d="M10 36h4l-2 2zM10 68h4l-2 2z" fill="#888"/>
                        <path d="M6 48h8v8H6z" fill="#a5cf98" stroke="#86b07a"/><circle cx="14" cy="56" r="3" fill="#fff"/><path d="M16 58l3 3"/>
                        <circle cx="19" cy="79" r="2"/>
                    </svg>
                </div>
            </div>
            <div class="vscroll right">
                <svg class="chev"><use href="#chev-up"/></svg>
                <i></i>
                <svg class="chev end"><use href="#chev-down"/></svg>
            </div>
        </div>
        <div class="view-bar">
            <span class="scale">1 : 100</span>
            <svg class="ic"><use href="#detail"/></svg>
            <svg class="ic"><use href="#style"/></svg>
            <svg class="ic"><use href="#sun"/></svg>
            <svg class="ic"><use href="#shadow"/></svg>
            <svg class="ic"><use href="#teapot"/></svg>
            <svg class="ic"><use href="#crop"/></svg>
            <svg class="ic"><use href="#cropview"/></svg>
            <svg class="ic"><use href="#lock3d"/></svg>
            <svg class="ic"><use href="#glasses"/></svg>
            <svg class="ic"><use href="#lamp"/></svg>
            <svg class="ic"><use href="#prop"/></svg>
            <svg class="ic"><use href="#analytic"/></svg>
            <svg class="ic"><use href="#displace"/></svg>
            <svg class="ic"><use href="#constraint"/></svg>
            <svg class="chev"><use href="#chev-left"/></svg>
            <div class="track"><i></i></div>
            <svg class="chev"><use href="#chev-right"/></svg>
        </div>
    </section>
</main>

<footer class="status">
    <span class="ready">就绪</span>
    <svg class="ic"><use href="#workset"/></svg>
    <div class="combo"><select aria-label="工作集"><option></option></select><svg class="chev"><use href="#chev-down"/></svg></div>
    <svg class="ic"><use href="#brush"/></svg>
    <span class="count">:0</span>
    <svg class="ic"><use href="#solid"/></svg>
    <svg class="ic"><use href="#solid2"/></svg>
    <div class="combo"><select aria-label="活动选项"><option>主模型</option></select><svg class="chev"><use href="#chev-down"/></svg></div>
    <div class="select-tools">
        <svg class="ic"><use href="#selA"/></svg>
        <svg class="ic"><use href="#selB"/></svg>
        <svg class="ic"><use href="#selC"/></svg>
        <svg class="ic"><use href="#selE"/></svg>
        <svg class="ic"><use href="#selD"/></svg>
        <svg class="ic"><use href="#gear"/></svg>
        <span><svg class="ic"><use href="#filter"/></svg>:0</span>
    </div>
</footer>

<!-- Macro manager dialog -->
<div class="dialog" role="dialog" aria-label="宏管理器">
    <div class="dialog-title"><span>宏管理器</span><button aria-label="关闭"><svg><use href="#close"/></svg></button></div>
    <div class="dialog-body">
        <div class="dialog-left">
            <div class="dialog-tabs">
                <button class="active"><svg><use href="#bulb"/></svg>应用程序</button>
                <button class="mono"><svg><use href="#bulb"/></svg>RAC_basic...</button>
            </div>
            <div class="dialog-page">
                <p>该应用程序中的宏已启用。</p>
                <div class="list">
                    <table>
                        <tr><th class="name">宏</th><th class="lang">语言</th><th>说明</th></tr>
                    </table>
                </div>
            </div>
        </div>
        <div class="dialog-btns">
            <button disabled>运行(<u>R</u>)</button>
            <button disabled>编辑(<u>E</u>)</button>
            <button disabled>单步运行(<u>S</u>)</button>
            <fieldset>
                <legend>创建</legend>
                <button>模块(<u>O</u>)</button>
                <button disabled>宏(<u>M</u>)</button>
            </fieldset>
            <button disabled>说明(<u>D</u>)</button>
            <button disabled>删除</button>
            <div class="bottom">
                <button>关闭</button>
                <button class="focus">帮助</button>
            </div>
        </div>
    </div>
    <svg class="grip" viewBox="0 0 8 8"><path d="M6 0h2v2H6zM6 3h2v2H6zM6 6h2v2H6zM3 3h2v2H3zM3 6h2v2H3zM0 6h2v2H0z" fill="#b5b5b5" stroke="none"/></svg>
</div>

<!-- red callouts -->
<svg class="marks" viewBox="0 0 1076 170" preserveAspectRatio="none">
    <rect x="410" y="11" width="46" height="27" rx="1"/>
    <rect x="922" y="36" width="68" height="32" rx="1"/>
    <path class="fill" d="M461 17L907 47v-4l10 8-10 6v-5L720 38z"/>
    <path class="fill" d="M938 76L821 160l4 4-19 2 9-16 3 4z"/>
</svg>

</body>
</html>
```
FILE: styles.css
```
* {
    box-sizing: border-box;
}
body {
    margin: 0;
    height: 100vh;
    display: flex;
    flex-direction: column;
    overflow: hidden;
    position: relative;
    font: 9px/12px "Noto Sans", "Noto Sans CJK SC", sans-serif;
    color: #222;
    background: #eff0f2;
}
button, input, select {
    font: inherit;
    color: inherit;
    margin: 0;
    padding: 0;
    border: none;
    background: none;
    border-radius: 0;
}
button {
    white-space: nowrap;
}
h2, p, ul {
    margin: 0;
    padding: 0;
    font: inherit;
}
svg {
    fill: none;
    stroke: currentColor;
    flex: none;
}
.sprite {
    position: absolute;
    width: 0;
    height: 0;
}
.ic {
    width: 14px;
    height: 14px;
}
.caret {
    width: 6px;
    height: 6px;
}
.chev {
    width: 8px;
    height: 8px;
}
.combo {
    position: relative;
    display: flex;
}
.combo select {
    appearance: none;
    width: 100%;
    padding: 0 3px;
}
.combo svg {
    position: absolute;
    right: 3px;
    top: 4px;
}

/* Title bar */
.titlebar {
    height: 19px;
    display: flex;
    background: #cbcbcd;
    color: #808082;
    flex: none;
}
.quick {
    width: 429px;
    display: flex;
    align-items: center;
    gap: 4px;
    padding: 0 0 5px 1px;
}
.quick .gap {
    margin-left: 3px;
}
.quick .caret {
    width: 5px;
    margin-right: 1px;
    color: #555;
}
.quick .more {
    border-top: 1px solid #555;
    margin-left: 4px;
}
.letter {
    width: 14px;
    font-size: 12px;
    line-height: 14px;
    text-align: center;
    color: #666;
}
.sep {
    width: 1px;
    height: 10px;
    background: #bbb;
}
.app-title {
    font-size: 9px;
    line-height: 10px;
    color: #333;
    white-space: nowrap;
}
.account, .window-tools, .window-btns {
    display: flex;
    align-items: center;
    gap: 4px;
    padding-bottom: 5px;
}
.account {
    margin-left: auto;
    width: 110px;
    color: #444;
}
.account a {
    color: #333;
    text-decoration: none;
}
.caret.left {
    transform: rotate(90deg);
}
.window-tools {
    width: 106px;
    gap: 7px;
    color: #555;
}
.cart {
    color: #2f4a75;
}
.help {
    width: 13px;
    height: 13px;
    border: 1px solid #345;
    border-radius: 50%;
    color: #1d55a8;
    font-weight: bold;
    line-height: 11px;
    text-align: center;
    background: #eee;
}
.window-btns {
    gap: 9px;
    padding-right: 3px;
    color: #222;
}
.window-btns button {
    width: 10px;
    height: 10px;
    display: flex;
    align-items: flex-end;
}
.window-btns svg {
    width: 10px;
    height: 10px;
}
.thick {
    stroke-width: 2;
}
.min {
    width: 6px;
    height: 2px;
    background: #222;
}

/* Ribbon tabs */
.tabs {
    height: 15px;
    display: flex;
    gap: 1px;
    background: #cbcbcd;
    flex: none;
}
.tabs button {
    padding: 0 7px;
}
.tabs .file {
    width: 33px;
    margin-right: 2px;
    background: #1f6fae;
    color: #fff;
}
.tabs .active {
    background: #f4f4f5;
}
.toggle {
    display: flex;
    align-items: center;
    gap: 3px;
    margin-left: 15px;
}
.toggle i {
    width: 11px;
    height: 7px;
    border: 1px solid #777;
    border-radius: 2px;
}

/* Ribbon */
.ribbon {
    display: flex;
    height: 93px;
    padding-bottom: 20px;
    border-bottom: 1px solid #c4c4c6;
    flex: none;
}
.panel {
    display: flex;
    flex-direction: column;
    border-right: 1px solid #dcdcde;
    border-bottom: 1px solid #d4d4d6;
}
.panel .body {
    flex: 1;
    display: flex;
    padding-top: 4px;
    color: #aaa;
}
.panel .body svg {
    color: #bcbcbc;
}
.panel .label {
    height: 14px;
    padding-top: 1px;
    text-align: center;
    color: #333;
}
.big {
    width: 29px;
    display: flex;
    flex-direction: column;
    align-items: center;
    gap: 4px;
    line-height: 11px;
    padding-top: 2px;
    position: relative;
}
.big > svg:first-child {
    width: 24px;
    height: 24px;
}
.big .corner {
    position: absolute;
    right: -1px;
    bottom: 13px;
    width: 4px;
}
.modify {
    height: 54px;
    margin: -1px 0 0 4px;
    background: #cfe0f4;
    border: 1px solid #6fa5dc;
}
.big > .cursor:first-child {
    width: 14px;
    padding: 2px 0;
}
.rows {
    display: flex;
    flex-direction: column;
    width: 100%;
}
.rows button {
    height: 18px;
    display: flex;
    align-items: center;
    gap: 3px;
}
.rows .ic {
    width: 13px;
    height: 13px;
}
.rows .caret, .panel .body .caret {
    color: #777;
}
.rows .caret {
    margin-left: 2px;
    width: 4px;
}
.rows.two {
    padding-top: 9px;
}
.rows.grow {
    flex: 1;
}
.p-select { width: 37px; }
.p-settings { width: 382px; }
.p-location { width: 53px; }
.p-design { width: 146px; }
.p-gen { width: 60px; }
.p-manage { width: 90px; }
.p-phase { width: 36px; }
.p-selection { width: 45px; }
.p-query { width: 77px; }
.p-macro { width: 66px; }
.p-visual {
    flex: 1;
    border-right: none;
}
.p-settings .body { padding-left: 2px; }
.c1 { width: 61px; margin-left: 2px; }
.c2 { width: 64px; }
.c3 { width: 81px; border-right: 1px solid #dcdcde; height: 54px; }
.c4 { width: 110px; padding-left: 7px; }
.p-location .body { padding-left: 6px; }
.p-design .body { padding: 4px 3px 0 2px; }
.p-design .rows { margin-left: 1px; }
.p-design .combo {
    height: 15px;
    margin-top: 1px;
    background: #fff;
    border: 1px solid #d2d2d4;
    color: #444;
}
.p-design select { line-height: 12px; }
.p-gen .body { padding-left: 1px; }
.p-manage .body { padding-left: 2px; }
.p-phase .body { padding-left: 4px; }
.p-selection .body,
.p-query .body,
.p-macro .body { padding-left: 5px; }
.p-visual .big { flex: 1; }

/* Main area */
.work {
    flex: 1;
    display: flex;
    min-height: 0;
}
.side {
    width: 165px;
    display: flex;
    flex-direction: column;
    border-right: 2px solid #c9c9cb;
    flex: none;
}
.side h2 {
    height: 16px;
    line-height: 16px;
    padding-left: 1px;
    white-space: nowrap;
}
.type {
    height: 52px;
    margin: 0 2px;
    display: flex;
    align-items: center;
    border: 1px solid #dcdcde;
    color: #333;
}
.thumb {
    width: 49px;
    height: 50px;
    display: flex;
    align-items: center;
    justify-content: center;
    border-right: 1px solid #ccc;
    color: #666;
}
.thumb svg {
    width: 24px;
    height: 24px;
}
.type p {
    flex: 1;
    padding-left: 3px;
}
.instance {
    display: flex;
    height: 18px;
}
.instance .combo {
    width: 108px;
    height: 16px;
    background: #e2e2e4;
    border: 1px solid #c8c8ca;
}
.instance .combo select {
    padding: 0 1px;
}
.instance .chev {
    color: #888;
}
.instance button {
    display: flex;
    align-items: center;
    gap: 1px;
    padding-left: 1px;
    height: 16px;
}
.instance button .ic {
    width: 11px;
    height: 11px;
}
.prop-list {
    display: flex;
    height: 167px;
}
.prop-data {
    width: 148px;
    height: 167px;
    overflow: hidden;
    background: #fff;
}
.group {
    height: 13px;
    display: flex;
    justify-content: space-between;
    background: #dfdfe1;
    padding-right: 1px;
}
.group.cut {
    height: 9px;
    overflow: hidden;
}
.prop-data table {
    width: 148px;
    height: 145px;
    border-collapse: collapse;
    table-layout: fixed;
    line-height: 12px;
}
.prop-data th, .prop-data td {
    border: 1px solid #d4d4d6;
    border-left: none;
    padding: 0 1px;
    text-align: left;
    font-weight: normal;
    white-space: nowrap;
    overflow: hidden;
}
.prop-data th {
    width: 70px;
    padding-left: 5px;
}
.prop-data td:last-child {
    width: 9px;
}
.prop-data .off {
    color: #888;
}
.prop-data td.edit {
    padding: 0;
}
.prop-data input[type="text"] {
    display: block;
    width: 100%;
    height: 13px;
    border: 1px solid #444;
    padding: 0 3px;
}
.prop-data td button {
    display: block;
    width: 100%;
    height: 13px;
    line-height: 11px;
    background: #e4e4e6;
    border: 1px solid #b4b4b6;
}
.prop-data input[type="checkbox"] {
    display: block;
    appearance: none;
    width: 10px;
    height: 10px;
    border: 1px solid #444;
    background: #fff;
}
.vscroll {
    flex: 1;
    display: flex;
    flex-direction: column;
    align-items: center;
    padding: 3px 0;
    background: #f0f0f1;
    color: #444;
}
.vscroll .end {
    margin-top: auto;
}
.thumb-s {
    width: 12px;
    height: 46px;
    margin-top: 3px;
    background: #cdcdcf;
}
.thumb-s.long {
    height: 134px;
}
.props footer {
    height: 19px;
    display: flex;
    justify-content: space-between;
    border-bottom: 1px solid #ccc;
}
.props footer a {
    color: #1a6fd0;
}
.props footer button {
    width: 55px;
    height: 15px;
    background: #ccccce;
    color: #999;
    margin-right: 2px;
}
.browser {
    flex: 1;
    display: flex;
    flex-direction: column;
    min-height: 0;
}
.browser h2 {
    height: 13px;
    line-height: 13px;
}
.tree-wrap {
    flex: 1;
    display: flex;
    min-height: 0;
}
.tree {
    width: 149px;
    list-style: none;
    background: #fff;
    overflow: hidden;
    padding-top: 1px;
    color: #111;
}
.tree li {
    height: 13px;
    line-height: 13px;
    display: flex;
    align-items: center;
    white-space: nowrap;
}
.box {
    width: 9px;
    height: 9px;
    color: #aaa;
}
.tree .ic {
    width: 12px;
    height: 12px;
    color: #666;
}
.tree .l0 {
    padding-left: 2px;
    gap: 3px;
}
.l0 .box {
    margin-right: 1px;
}
.tree .l0.leaf {
    padding-left: 15px;
}
.tree .l1 {
    padding-left: 17px;
    gap: 7px;
}
.tree .l1.leaf {
    padding-left: 33px;
}
.tree .l2 {
    margin-left: 35px;
    border-left: 1px solid #ddd;
    gap: 4px;
}
.tree .l2::before {
    content: "";
    width: 8px;
    height: 1px;
    background: #ddd;
}
.sel {
    background: #e0e0e2;
}
.hscroll {
    height: 14px;
    display: flex;
    align-items: center;
    padding: 0 15px 0 2px;
    gap: 3px;
    color: #444;
}
.hscroll i {
    flex: 1;
    height: 12px;
    background: #cdcdcf;
}

/* View area */
.view {
    flex: 1;
    display: flex;
    flex-direction: column;
    min-width: 0;
}
.view-tabs {
    height: 15px;
    display: flex;
    background: #c6c6c8;
    color: #a0a0a2;
    flex: none;
}
.view-tabs button {
    display: flex;
    align-items: center;
    gap: 5px;
    padding: 0 3px;
}
.view-tabs .ic {
    width: 12px;
    height: 12px;
    color: #888;
}
.view-tabs .sheet-tab {
    width: 115px;
}
.view-tabs .active {
    width: 96px;
    background: #fff;
}
.x {
    width: 8px;
    height: 8px;
    margin-left: auto;
    color: #222;
    stroke-width: 2;
}
.view-tabs > .caret {
    margin: 5px 2px 0 auto;
    color: #333;
}
.view-body {
    flex: 1;
    display: flex;
    min-height: 0;
}
.canvas {
    flex: 1;
    position: relative;
    background: #fff;
}
.scene {
    position: absolute;
    width: 100%;
    height: 100%;
    stroke: none;
}
.viewcube {
    position: absolute;
    top: 37px;
    right: 15px;
    width: 100px;
    height: 90px;
}
.face {
    font-size: 15px;
    fill: #aaa;
    stroke: none;
}
.dir {
    font-size: 13px;
    fill: #b2b2b4;
    stroke: none;
}
.navbar {
    position: absolute;
    top: 125px;
    right: 1px;
    width: 25px;
    height: 84px;
    border: 1px solid #c4c4c6;
    border-radius: 3px;
    background: #f6f6f7;
    color: #999;
}
.navbar svg {
    width: 23px;
    height: 82px;
}
.vscroll.right {
    flex: none;
    width: 11px;
}
.vscroll.right i {
    width: 11px;
    height: 12px;
    margin-top: 240px;
    background: #cdcdcf;
}
.view-bar {
    height: 15px;
    display: flex;
    align-items: center;
    gap: 4px;
    padding: 0 15px 0 17px;
    background: #f0f0f2;
    color: #444;
    flex: none;
}
.view-bar .ic {
    width: 12px;
    height: 12px;
}
.scale {
    width: 40px;
    font-family: "Liberation Sans", sans-serif;
}
.track {
    flex: 1;
    display: flex;
}
.track i {
    width: 13px;
    height: 13px;
    margin-left: 49%;
    background: #cdcdcf;
}

/* Status bar */
.status {
    height: 18px;
    display: flex;
    align-items: center;
    gap: 4px;
    background: #cbcbcd;
    color: #777;
    flex: none;
}
.ready {
    width: 388px;
    color: #222;
}
.status .ic {
    width: 13px;
    height: 13px;
    color: #8a8a8c;
}
.status .combo {
    width: 153px;
    height: 14px;
    background: #fff;
}
.status .chev {
    color: #aaa;
}
.count {
    width: 13px;
    color: #333;
}
.select-tools {
    display: flex;
    align-items: center;
    gap: 5px;
    margin-left: auto;
    padding-right: 32px;
}
.select-tools span {
    display: flex;
    align-items: center;
    color: #333;
}

/* Dialog */
.dialog {
    position: absolute;
    left: 257px;
    top: 167px;
    width: 610px;
    height: 430px;
    display: flex;
    flex-direction: column;
    border: 3px solid #ee2a1e;
    border-radius: 3px;
    background: #eff0f2;
    font-family: "Liberation Mono", "Noto Sans CJK SC", monospace;
    color: #333;
}
.dialog-title {
    height: 22px;
    display: flex;
    align-items: center;
    justify-content: space-between;
    padding: 0 7px 0 5px;
    background: #fff;
    color: #999;
}
.dialog-title svg {
    display: block;
    width: 9px;
    height: 9px;
}
.dialog-body {
    flex: 1;
    display: flex;
    min-height: 0;
}
.dialog-left {
    flex: 1;
    display: flex;
    flex-direction: column;
    padding: 7px 0 8px 8px;
}
.dialog-tabs {
    display: flex;
    align-items: flex-end;
    height: 14px;
}
.dialog-tabs button {
    display: flex;
    align-items: center;
    gap: 3px;
    height: 13px;
    padding: 0 3px;
    border: 1px solid #ddd;
    border-bottom: none;
}
.dialog-tabs .active {
    height: 14px;
    background: #fff;
}
.dialog-tabs .mono {
    font-size: 8px;
}
.dialog-tabs svg {
    width: 8px;
    height: 10px;
}
.dialog-page {
    flex: 1;
    display: flex;
    flex-direction: column;
    gap: 5px;
    padding: 9px 13px 9px 10px;
    background: #fff;
    border-right: 1px solid #ddd;
}
.list {
    flex: 1;
    border: 1px solid #ddd;
    border-left-color: #777;
}
.list table {
    width: 100%;
    border-collapse: collapse;
    background: #f1f1f2;
}
.list th {
    height: 15px;
    padding: 0 3px;
    border: 1px solid #999;
    border-width: 1px 0 1px 1px;
    text-align: left;
    font-weight: normal;
    color: #111;
}
.list .name {
    width: 251px;
    border-left: none;
}
.list .lang {
    width: 64px;
    text-align: center;
}
.dialog-btns {
    width: 92px;
    display: flex;
    flex-direction: column;
    align-items: center;
    gap: 7px;
    padding: 21px 4px 8px 0;
}
.dialog-btns button {
    width: 56px;
    height: 16px;
    line-height: 14px;
    background: #e4e4e5;
    border: 1px solid #bcbcbe;
}
.dialog-btns button:disabled {
    background: #cbcbcd;
    border-color: #cbcbcd;
    color: #999;
}
.dialog-btns fieldset {
    width: 79px;
    margin: -6px 0 0;
    padding: 1px 0 5px;
    border: 1px solid #ddd;
    display: flex;
    flex-direction: column;
    align-items: center;
    gap: 8px;
}
.dialog-btns legend {
    height: 12px;
    padding: 0 2px;
    margin: 0 auto;
}
.bottom {
    display: flex;
    flex-direction: column;
    gap: 5px;
    margin-top: auto;
}
.dialog-btns .focus {
    background: #e3f0fa;
    border-color: #4a9bdb;
}
.grip {
    position: absolute;
    right: 0;
    bottom: 0;
    width: 7px;
    height: 7px;
}

/* Callouts */
.marks {
    position: absolute;
    left: 0;
    top: 0;
    width: 100%;
    height: 170px;
    pointer-events: none;
    stroke: #ee2a1e;
    stroke-width: 3;
}
.marks .fill {
    fill: #ee2a1e;
    stroke: none;
}
```
